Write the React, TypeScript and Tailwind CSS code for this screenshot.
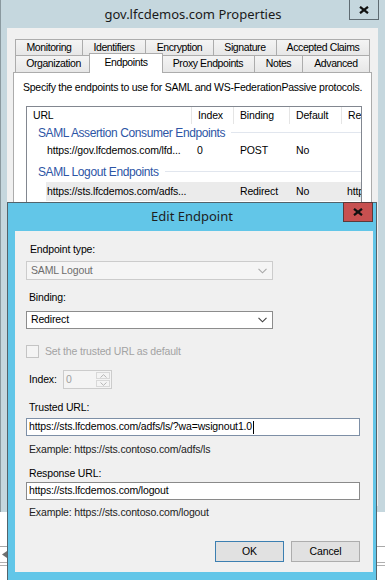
import React from "react";

const XGlyph = () => (
  <svg width="10" height="8" viewBox="0 0 10 8">
    <path d="M1 0.8 L9 7.2 M9 0.8 L1 7.2" stroke="#111" strokeWidth="2.2" strokeLinecap="butt" />
  </svg>
);

const Chevron = ({ color }: { color: string }) => (
  <svg width="9" height="6" viewBox="0 0 9 6" className="absolute right-[5px] top-1/2 -translate-y-1/2">
    <polyline points="0.5,0.8 4.5,4.8 8.5,0.8" fill="none" stroke={color} strokeWidth="1.1" />
  </svg>
);

const row1 = [
  { t: "Monitoring", w: 67 },
  { t: "Identifiers", w: 63 },
  { t: "Encryption", w: 68 },
  { t: "Signature", w: 63 },
  { t: "Accepted Claims", w: 94 },
];

const row2 = [
  { t: "Organization", w: 76 },
  { t: "Endpoints", w: 70, sel: true },
  { t: "Proxy Endpoints", w: 93 },
  { t: "Notes", w: 48 },
  { t: "Advanced", w: 68 },
];

export default function App() {
  return (
    <div className="relative w-[385px] h-[580px] overflow-hidden bg-white font-['Liberation_Sans',Arial,sans-serif] text-[10.5px] tracking-[-0.15px] text-black">
      {/* Background properties window */}
      <div className="h-[512px] bg-[#c5d7de] border-l border-[#8a999f] flex flex-col">
        <div className="relative h-[28px] shrink-0 flex items-center justify-center">
          <span className="mt-[2px] font-['Noto_Sans',sans-serif] text-[13px] tracking-normal text-[#1a1a1a]">
            gov.lfcdemos.com Properties
          </span>
          <div className="absolute right-[6px] top-0 w-[30px] h-[20px] border border-t-0 border-[#5f6b72] flex items-center justify-center">
            <XGlyph />
          </div>
        </div>
        <div className="flex-1 ml-[6px] mr-[7px] mb-[6px] bg-[#f0f0f0] pt-[11px] flex flex-col">
          {/* tabs */}
          <div className="mx-[8px] flex flex-col text-[10.5px] tracking-[-0.4px]">
            <div className="flex h-[16px]">
              {row1.map((t, i) => (
                <div
                  key={t.t}
                  style={{ width: t.w }}
                  className={`h-full border-t border-l ${i === row1.length - 1 ? "border-r" : ""} border-[#acacac] bg-linear-to-b from-[#f4f4f4] to-[#e7e7e7] flex items-center justify-center`}
                >
                  {t.t}
                </div>
              ))}
            </div>
            <div className="flex h-[17px]">
              {row2.map((t, i) =>
                t.sel ? (
                  <div
                    key={t.t}
                    style={{ width: t.w + 4 }}
                    className="relative z-10 -mx-[2px] self-start h-[20px] -mt-[2px] border border-b-0 border-[#acacac] bg-white flex items-center justify-center pb-[2px]"
                  >
                    {t.t}
                  </div>
                ) : (
                  <div
                    key={t.t}
                    style={{ width: t.w }}
                    className={`h-full border-t border-l ${i === row2.length - 1 ? "border-r" : ""} border-[#acacac] bg-linear-to-b from-[#f4f4f4] to-[#e7e7e7] flex items-center justify-center`}
                  >
                    {t.t}
                  </div>
                )
              )}
            </div>
          </div>
          {/* panel */}
          <div className="flex-1 mx-[6px] border border-[#acacac] bg-white flex flex-col">
            <div className="mt-[8px] pl-[9px] h-[13px] leading-[13px] tracking-[-0.25px] whitespace-nowrap">
              Specify the endpoints to use for SAML and WS-FederationPassive protocols.
            </div>
            <div className="mt-[12px] ml-[12px] mr-[9px] flex-1 border border-[#828790] bg-white flex flex-col">
              <div className="flex h-[17px] items-stretch">
                <div className="w-[165px] border-r border-[#e5e5e5] pl-[6px] flex items-center">URL</div>
                <div className="w-[42px] border-r border-[#e5e5e5] pl-[6px] flex items-center">Index</div>
                <div className="w-[56px] border-r border-[#e5e5e5] pl-[6px] flex items-center">Binding</div>
                <div className="w-[52px] border-r border-[#e5e5e5] pl-[6px] flex items-center">Default</div>
                <div className="flex-1 pl-[6px] flex items-center overflow-hidden whitespace-nowrap">Re</div>
              </div>
              <div className="flex h-[17px] items-center pl-[11px]">
                <span className="text-[12px] tracking-[-0.4px] text-[#2d55a5] whitespace-nowrap">
                  SAML Assertion Consumer Endpoints
                </span>
                <div className="flex-1 h-px bg-[#e1e6ee] ml-[6px]" />
              </div>
              <div className="flex h-[20px] items-center">
                <div className="ml-[19px] flex-1 flex items-center h-full">
                  <div className="w-[146px] pl-[1px] whitespace-nowrap">https://gov.lfcdemos.com/lfd...</div>
                  <div className="w-[42px] pl-[5px]">0</div>
                  <div className="w-[56px] pl-[6px]">POST</div>
                  <div className="w-[52px] pl-[6px]">No</div>
                  <div className="flex-1" />
                </div>
              </div>
              <div className="flex h-[21px] items-center pl-[11px]">
                <span className="text-[12px] tracking-[-0.4px] text-[#2d55a5] whitespace-nowrap">
                  SAML Logout Endpoints
                </span>
                <div className="flex-1 h-px bg-[#e1e6ee] ml-[6px]" />
              </div>
              <div className="flex h-[19px] items-center">
                <div className="ml-[19px] flex-1 flex items-center h-full bg-[#ebebeb] overflow-hidden">
                  <div className="w-[146px] pl-[1px] whitespace-nowrap">https://sts.lfcdemos.com/adfs...</div>
                  <div className="w-[42px] pl-[5px]"></div>
                  <div className="w-[56px] pl-[6px]">Redirect</div>
                  <div className="w-[52px] pl-[6px]">No</div>
                  <div className="flex-1 pl-[5px] whitespace-nowrap overflow-hidden">http</div>
                </div>
              </div>
              <div className="flex-1" />
            </div>
            <div className="h-[8px]" />
          </div>
        </div>
      </div>
      {/* area below background window */}
      <div className="h-[34px]" />
      <div className="h-px bg-[#a8a8a8]" />
      <div className="h-[15px] flex items-center pl-[2px]">
        <svg width="5" height="7" viewBox="0 0 5 7">
          <polygon points="5,0 5,7 0,3.5" fill="#707070" />
        </svg>
      </div>
      <div className="h-px bg-[#b0b0b0]" />
      <div className="h-[2px]" />
      <div className="h-px bg-[#b0b0b0]" />

      {/* Edit Endpoint dialog (window on top) */}
      <div className="absolute left-[7px] top-[202px] w-[370px] h-[380px] border border-[#53636b] bg-[#62c6e8] flex flex-col">
        <div className="h-[28px] shrink-0 flex items-center justify-center">
          <span className="font-['Noto_Sans',sans-serif] text-[13px] tracking-normal text-[#1e1e1e]">Edit Endpoint</span>
        </div>
        <div className="absolute right-[3px] top-[-1px] w-[30px] h-[20px] border border-[#5b3a3a] bg-[#c75050] flex items-center justify-center">
          <XGlyph />
        </div>
        <div className="ml-[7px] mr-[3px] h-[341px] bg-[#f0f0f0] flex flex-col pl-[11px] pr-[13px]">
          <div className="mt-[12px] h-[13px] leading-[13px] pl-[4px]">Endpoint type:</div>
          <div className="relative mt-[5px] w-[247px] h-[19px] border border-[#cccccc] bg-[#f5f5f5] flex items-center pl-[4px] text-[#6d6d6d]">
            SAML Logout
            <Chevron color="#a8a8a8" />
          </div>
          <div className="mt-[11px] h-[13px] leading-[13px] pl-[3px]">Binding:</div>
          <div className="relative mt-[7px] w-[247px] h-[18px] border border-[#8c8c8c] bg-white flex items-center pl-[4px]">
            Redirect
            <Chevron color="#404040" />
          </div>
          <div className="mt-[16px] h-[13px] flex items-center">
            <div className="w-[13px] h-[13px] border border-[#c4c4c4] bg-[#f4f4f4]" />
            <span className="ml-[6px] text-[#a3a3a3] whitespace-nowrap">Set the trusted URL as default</span>
          </div>
          <div className="mt-[12px] h-[19px] flex items-center">
            <span className="w-[37px] pl-[3px]">Index:</span>
            <div className="w-[49px] h-[19px] border border-[#cccccc] bg-[#f4f4f4] flex items-center">
              <span className="flex-1 pl-[2px] text-[#a0a0a0]">0</span>
              <div className="w-[14px] h-full mr-[1px] flex flex-col py-[1px] gap-[1px]">
                <div className="flex-1 border border-[#d8d8d8] flex items-center justify-center">
                  <svg width="7" height="4" viewBox="0 0 7 4">
                    <polyline points="0.5,3.5 3.5,0.7 6.5,3.5" fill="none" stroke="#b5b5b5" strokeWidth="1" />
                  </svg>
                </div>
                <div className="flex-1 border border-[#d8d8d8] flex items-center justify-center">
                  <svg width="7" height="4" viewBox="0 0 7 4">
                    <polyline points="0.5,0.5 3.5,3.3 6.5,0.5" fill="none" stroke="#b5b5b5" strokeWidth="1" />
                  </svg>
                </div>
              </div>
            </div>
          </div>
          <div className="mt-[12px] h-[13px] leading-[13px] pl-[3px]">Trusted URL:</div>
          <div className="mt-[4px] w-[334px] h-[18px] border border-[#7d8fa6] bg-white flex items-center pl-[2px] whitespace-nowrap">
            <span>https://sts.lfcdemos.com/adfs/ls/?wa=wsignout1.0</span>
            <span className="w-px h-[13px] bg-black ml-[1px]" />
          </div>
          <div className="mt-[7px] h-[13px] leading-[13px] pl-[3px] text-[#222]">Example: https://sts.contoso.com/adfs/ls</div>
          <div className="mt-[11px] h-[13px] leading-[13px] pl-[3px]">Response URL:</div>
          <div className="mt-[2px] w-[334px] h-[18px] border border-[#8a8a8a] bg-white flex items-center pl-[2px] whitespace-nowrap">
            https://sts.lfcdemos.com/logout
          </div>
          <div className="mt-[6px] h-[13px] leading-[13px] pl-[3px] text-[#222]">Example: https://sts.contoso.com/logout</div>
          <div className="mt-[22px] flex justify-end gap-[7px]">
            <div className="w-[69px] h-[21px] border border-[#3c7fb1] bg-[#e1e1e1] flex items-center justify-center">OK</div>
            <div className="w-[69px] h-[21px] border border-[#adadad] bg-[#e1e1e1] flex items-center justify-center">Cancel</div>
          </div>
        </div>
      </div>
    </div>
  );
}
